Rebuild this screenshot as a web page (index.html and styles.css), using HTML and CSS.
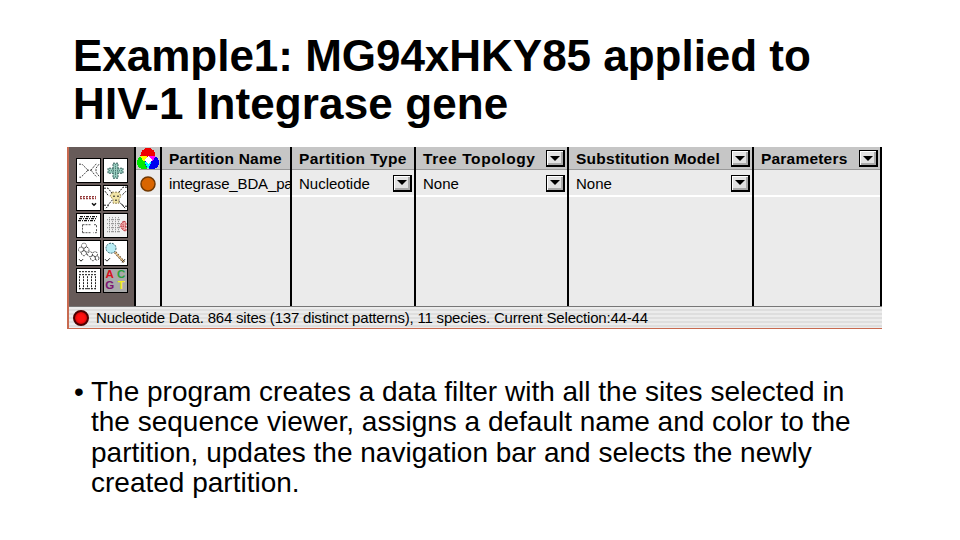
FILE: index.html
```html
<!DOCTYPE html>
<html lang="en">
<head>
  <meta charset="UTF-8" />
  <title>Example1: MG94xHKY85 applied to HIV-1 Integrase gene</title>
  <link rel="stylesheet" href="styles.css">
</head>
<body>

  <div class="slide">
    <h1><span class="line-one">Example1: MG94xHKY85 applied to</span><br><span class="line-two">HIV-1 Integrase gene</span></h1>

    <div class="viewer">
      <div class="main">
        <div class="toolbar">
          <svg class="tool" viewBox="0 0 23 23">
            <g fill="none" stroke="#444" stroke-dasharray="2 1">
              <path d="M2 5h3l4 4 2 2-3 3-4 4H2M10 11h4M14 11l4-5 2-2M14 11l4 5 2 2M22 5l-3 4v4l3 4" />
            </g>
          </svg>
          <svg class="tool" viewBox="0 0 23 23">
            <path d="M9 4h5v5h5v5h-5v5H9v-5H4V9h5z" fill="#9ccfc2" stroke="#355c58" stroke-dasharray="2 1" />
            <path d="M9 9h5v5H9zM11.500 5v13M5 11.500h13" fill="none" stroke="#47736c" stroke-dasharray="1 1" />
          </svg>
          <svg class="tool" viewBox="0 0 23 23">
            <path d="M3 10.500h16M3 12.500h16" stroke="#7a1515" stroke-dasharray="2 1" />
            <path d="M3 11.500h16" stroke="#b04a4a" stroke-dasharray="1 2" />
            <path d="M15 17l2 2 2-2" fill="none" stroke="#111" stroke-width="1.500" />
          </svg>
          <svg class="tool" viewBox="0 0 23 23">
            <path d="M8 6h7l2 4-2 3v4H9v-4L6 10z" fill="#f1e4a6" stroke="#998958" stroke-dasharray="2 1" />
            <g fill="none" stroke="#222" stroke-dasharray="2 1">
              <path d="M0 2h4l4 5M23 1h-4l-4 5M0 19h4l4-5M23 20h-4l-4-5M1 5l3 4M22 5l-4 4M2 22l3-3M21 22l-3-4" />
            </g>
            <path d="M9 10h2M13 10h2M11 14h2" stroke="#222" />
          </svg>
          <svg class="tool" viewBox="0 0 23 23">
            <path d="M3 2.500h17M2 4.500h17M1 6.500h17" stroke="#111" stroke-width="1.300" stroke-dasharray="3 1 1 1" />
            <path d="M5.500 10.500h9M5.500 18.500h9M5.500 10.500v8M17 10.500h2.500v3M19.500 15v3.500h-3" fill="none" stroke="#555" stroke-dasharray="2 1" />
          </svg>
          <svg class="tool" viewBox="0 0 23 23">
            <path d="M0 0h23v23H0z" fill="#f0f0f0" />
            <path d="M5.500 3v16M8.500 3v16M11.500 3v16M14.500 3v16M3 5.500h13M3 9.500h13M3 13.500h13M3 17.500h13" stroke="#888" stroke-dasharray="1 1" />
            <path d="M20 7l2 1v9l-3-1-3-4 2-4z" fill="#efaaaa" stroke="#ba3940" stroke-dasharray="2 1" />
            <path d="M17 12h5M19 8v8" stroke="#ba3940" stroke-dasharray="1 1" />
          </svg>
          <svg class="tool" viewBox="0 0 23 23">
            <g fill="none" stroke="#444" stroke-dasharray="2 1">
              <circle cx="7" cy="4.500" r="2.500" /><circle cx="4" cy="8.500" r="2.500" /><circle cx="9.500" cy="8.500" r="2.500" />
              <circle cx="7" cy="12" r="2.500" /><circle cx="13" cy="13" r="2.500" /><circle cx="18" cy="13" r="2.500" />
              <circle cx="16" cy="17" r="2.500" /><circle cx="20" cy="17" r="2" />
            </g>
            <path d="M2 18l2 2 2-2" fill="none" stroke="#111" />
          </svg>
          <svg class="tool" viewBox="0 0 23 23">
            <path d="M11 11l9 10" stroke="#5b482a" stroke-width="2.600" stroke-dasharray="2 1" />
            <path d="M11 11l9 10" stroke="#e8bd83" stroke-width="1.200" />
            <circle cx="7" cy="7" r="5" fill="#b8edf5" stroke="#37656f" stroke-dasharray="2 1" />
            <path d="M1 18l2 2 3-3M18 21l3-3" fill="none" stroke="#222" />
          </svg>
          <svg class="tool" viewBox="0 0 23 23">
            <path d="M2 2.500h18M2 5.500h18" stroke="#111" stroke-dasharray="2 1" />
            <path d="M2.500 7v13M6.500 7v13M10.500 7v13M14.500 7v13M18.500 7v13M2 19.500h17" stroke="#222" stroke-dasharray="2 1" />
          </svg>
          <div class="tool bases">
            <span class="base-a">A</span><span class="base-c">C</span>
            <span class="base-g">G</span><span class="base-t">T</span>
          </div>
        </div>

        <div class="table">
          <div class="cell head swatch">
            <svg width="22" height="22" viewBox="0 0 22 22" shape-rendering="crispEdges">
              <circle cx="11" cy="7.500" r="7.500" fill="#f00000" />
              <circle cx="7" cy="14.500" r="7" fill="#00e800" />
              <circle cx="15" cy="14.500" r="7" fill="#0000f0" />
              <path d="M4 8q3-1 7 1l-1 5-5-2z" fill="#ff0" />
              <path d="M18 8q-3-1-7 1l1 5q6-1 6-6z" fill="#f0f" />
              <path d="M11 10l3 5-3 6-3-6z" fill="#0ff" />
              <path d="M11 8l4 4-4 4-4-4z" fill="#fff" />
            </svg>
          </div>
          <div class="cell head"><span class="h-name">Partition Name</span></div>
          <div class="cell head"><span class="h-type">Partition Type</span></div>
          <div class="cell head"><span class="h-tree">Tree Topology</span><i class="drop"></i></div>
          <div class="cell head"><span class="h-model">Substitution Model</span><i class="drop"></i></div>
          <div class="cell head"><span class="h-params">Parameters</span><i class="drop"></i></div>

          <div class="cell row swatch">
            <svg width="16" height="16" viewBox="0 0 16 16"><circle cx="8" cy="8" r="7" fill="#d96500" stroke="#713800" stroke-width="1.500" /></svg>
          </div>
          <div class="cell row"><span class="t-name">integrase_BDA_pa</span></div>
          <div class="cell row"><span>Nucleotide</span><i class="drop"></i></div>
          <div class="cell row"><span>None</span><i class="drop"></i></div>
          <div class="cell row"><span>None</span><i class="drop"></i></div>
          <div class="cell row"></div>

          <div class="cell"></div>
          <div class="cell"></div>
          <div class="cell"></div>
          <div class="cell"></div>
          <div class="cell"></div>
          <div class="cell"></div>
        </div>
      </div>

      <div class="status">
        <span class="lamp"></span>
        <span class="status-text">Nucleotide Data. 864 sites (137 distinct patterns), 11 species. Current Selection:44-44</span>
      </div>
    </div>

    <ul>
      <li>The program creates a data filter with all the sites selected in<br>the sequence viewer, assigns a default name and color to the<br>partition, updates the navigation bar and selects the newly<br>created partition.</li>
    </ul>
  </div>

</body>
</html>
```

FILE: styles.css
```css
* { box-sizing: border-box; }
body {
  margin: 0;
  background: #fff;
  color: #000;
  font-family: "Liberation Sans", Arial, sans-serif;
}
.slide {
  width: 960px;
  height: 540px;
  padding: 32px 78px 0 67px;
  overflow: hidden;
}
h1 {
  height: 115px;
  margin: 0;
  padding-left: 6px;
  font-size: 44px;
  line-height: 47.5px;
  font-weight: bold;
  white-space: nowrap;
}
.line-one { letter-spacing: -0.02px; }
.line-two { letter-spacing: 0.13px; }

/* partition window */
.viewer {
  width: 815px;
  height: 182px;
  border-left: 2px solid #c86a50;
  border-bottom: 1px solid #c86a50;
}
.main {
  display: flex;
  height: 159px;
}
.toolbar {
  display: grid;
  grid-template-columns: 25px 25px;
  grid-auto-rows: 25.4px;
  gap: 2px;
  width: 65px;
  padding: 11px 0 0 7px;
  background: #675b59;
}
.tool {
  width: 25px;
  height: 25.4px;
  background: #fff;
  border: 1px solid #000;
}
.bases {
  display: grid;
  grid-template-columns: 1fr 1fr;
  grid-template-rows: 11.5px 11.5px;
  background: #aaa;
  font-size: 11.5px;
  line-height: 11.5px;
  font-weight: bold;
  text-align: center;
}
.base-a { color: #d8101c; }
.base-c { color: #28a03c; }
.base-g { color: #7c1470; }
.base-t { color: #f4ee20; }

.table {
  display: grid;
  grid-template-columns: 26px 130px 124px 153px 185px 128px;
  grid-template-rows: 23px 27px 1fr;
  width: 748px;
  border-left: 2px solid #000;
}
.cell {
  display: flex;
  align-items: center;
  justify-content: space-between;
  min-width: 0;
  padding: 0 2px 0 7px;
  background: #ebebeb;
  border-right: 2px solid #000;
  font-size: 15px;
  white-space: nowrap;
}
.head {
  background: linear-gradient(#c6c6c6 22px, #999 22px);
  font-size: 15.5px;
  font-weight: bold;
}
.row {
  background: linear-gradient(#ebebeb 25px, #fff 25px);
  padding-bottom: 1px;
}
.swatch {
  justify-content: center;
  padding: 0;
}
.swatch svg { flex: none; }
.h-name { letter-spacing: 0.25px; }
.h-type { letter-spacing: 0.4px; }
.h-tree { letter-spacing: 0.6px; }
.h-model { letter-spacing: 0.25px; }
.h-params { letter-spacing: 0.2px; }
.t-name { letter-spacing: -0.15px; }
.drop {
  display: flex;
  align-items: center;
  justify-content: center;
  flex: none;
  width: 19px;
  height: 17px;
  background: #e2e2e2;
  border: 1px solid #000;
  border-right-width: 2px;
  border-bottom-width: 2px;
  box-shadow: inset 1px 1px #fff, inset -2px -2px #aaa;
}
.drop::after {
  content: "";
  border: 5px solid transparent;
  border-top: 5px solid #000;
  border-bottom: 0;
}

.status {
  display: flex;
  align-items: center;
  gap: 7px;
  height: 22px;
  padding-left: 4px;
  border-top: 1px solid #777;
  background: repeating-linear-gradient(#ececec 0 2px, #dedede 2px 4px);
  font-size: 15px;
  white-space: nowrap;
}
.status-text { letter-spacing: -0.2px; }
.lamp {
  width: 16px;
  height: 16px;
  border: 2px solid #4c0000;
  border-radius: 50%;
  background: radial-gradient(#ff1010 40%, #b00000);
}

ul {
  margin: 0;
  padding: 48px 0 0 24px;
  list-style: none;
  font-size: 28px;
  line-height: 30.3px;
  white-space: nowrap;
}
li::before {
  content: "•";
  float: left;
  width: 17px;
  margin-left: -17px;
}
```
